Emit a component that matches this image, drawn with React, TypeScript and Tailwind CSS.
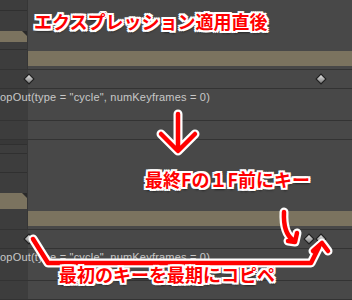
import React from "react";

const outline =
  "[text-shadow:2px_0_0_#fff,-2px_0_0_#fff,0_2px_0_#fff,0_-2px_0_#fff,2px_2px_0_#fff,-2px_-2px_0_#fff,2px_-2px_0_#fff,-2px_2px_0_#fff,1px_3px_2px_rgba(0,0,0,0.5)]";

function Diamond({ x }: { x: number }) {
  return (
    <div
      className="absolute top-1/2 h-[8px] w-[8px] rotate-45 border border-[#1e1e1e] bg-gradient-to-br from-[#e6e6e6] to-[#7a7a7a]"
      style={{ left: x - 4, marginTop: -4 }}
    />
  );
}

function Line() {
  return <div className="h-px w-full bg-[#333333]" />;
}

function TanLeft({ h }: { h: string }) {
  return (
    <div className={`relative ${h} w-full bg-[#7b735f]`}>
      <div className="absolute right-0 top-0 h-0 w-0 border-l-[5px] border-t-[5px] border-l-transparent border-t-[#2a2a2a]" />
    </div>
  );
}

function Section({ top }: { top: "a" | "b" }) {
  return (
    <>
      {/* keyframe row */}
      <div className="relative flex h-[18px]">
        <div className="w-[28px] bg-[#3d3d3d]" />
        <div className="flex-1" />
        {top === "a" ? (
          <>
            <Diamond x={29} />
            <Diamond x={321} />
          </>
        ) : (
          <>
            <Diamond x={29} />
            <Diamond x={309} />
            <Diamond x={321} />
          </>
        )}
      </div>
      <Line />
      {/* expression text row */}
      <div className="relative flex h-[31px]">
        <div className="w-[28px] bg-[#3d3d3d]" />
        <div className="flex-1" />
        <div className="absolute left-0 top-[2px] whitespace-nowrap font-['Liberation_Sans',sans-serif] text-[11px] leading-[13px] tracking-[0.2px] text-[#c8c8c8]">
          opOut(type = "cycle", numKeyframes = 0)
        </div>
      </div>
      <Line />
    </>
  );
}

export default function App() {
  return (
    <div className="relative h-[300px] w-[352px] overflow-hidden bg-[#484848] font-['Noto_Sans_CJK_JP',sans-serif]">
      {/* top block */}
      <div className="flex h-[51px]">
        <div className="flex w-[28px] flex-col border-r border-[#363636] bg-[#3d3d3d]">
          <div className="h-[10px]" />
          <div className="h-px bg-[#303030]" />
          <div className="h-[20px]" />
          <TanLeft h="h-[11px]" />
          <div className="h-[7px]" />
          <div className="h-px bg-[#303030]" />
          <div className="flex-1" />
        </div>
        <div className="flex-1" />
      </div>
      <div className="flex h-[18px]">
        <div className="w-[28px] border-r border-[#363636] bg-[#3d3d3d]" />
        <div className="flex flex-1 flex-col">
          <div className="h-[15px] bg-[#7b735f]" />
        </div>
      </div>
      <Line />
      <Section top="a" />
      {/* middle empty row */}
      <div className="flex h-[18px]">
        <div className="w-[28px] bg-[#3d3d3d]" />
        <div className="flex-1" />
      </div>
      <Line />
      {/* bottom block */}
      <div className="flex h-[71px]">
        <div className="flex w-[28px] flex-col border-r border-[#363636] bg-[#3d3d3d]">
          <div className="h-[4px] bg-[#383838]" />
          <div className="h-px bg-[#303030]" />
          <div className="h-[8px]" />
          <div className="h-px bg-[#303030]" />
          <div className="h-[18px]" />
          <div className="h-px bg-[#303030]" />
          <div className="h-[20px]" />
          <TanLeft h="h-[16px]" />
          <div className="flex-1" />
        </div>
        <div className="flex-1" />
      </div>
      <div className="flex h-[18px]">
        <div className="w-[28px] border-r border-[#363636] bg-[#3d3d3d]" />
        <div className="flex flex-1 flex-col">
          <div className="h-[15px] bg-[#7b735f]" />
        </div>
      </div>
      <Line />
      <Section top="b" />
      <div className="flex h-[18px]">
        <div className="w-[28px] bg-[#3d3d3d]" />
        <div className="flex-1" />
      </div>
      <Line />

      {/* annotations */}
      <svg className="pointer-events-none absolute left-0 top-0" width="352" height="300" viewBox="0 0 352 300">
        <g fill="none" stroke="#ffffff" strokeWidth="9" strokeLinejoin="round" strokeLinecap="round">
          <path d="M178 114 L178 150 M161 134 L178 151 L195 134" />
          <path d="M284 212 Q283 233 293 240 M288 241 L295 242 L297 233" />
          <path d="M33 239 L48 263 L311 263 L319 247 M313 251 L322 243 L328 251" />
        </g>
        <g fill="none" stroke="#ff0000" strokeWidth="4.5" strokeLinejoin="round" strokeLinecap="round">
          <path d="M178 114 L178 150 M161 134 L178 151 L195 134" />
          <path d="M284 212 Q283 233 293 240 M288 241 L295 242 L297 233" />
          <path d="M33 239 L48 263 L311 263 L319 247 M313 251 L322 243 L328 251" />
        </g>
      </svg>

      <div className={`absolute left-[34px] top-[12px] whitespace-nowrap text-[18px] font-bold leading-[18px] text-[#ff0000] ${outline}`}>
        エクスプレッション適用直後
      </div>
      <div className={`absolute left-[145px] top-[170px] whitespace-nowrap text-[18px] font-bold leading-[18px] text-[#ff0000] ${outline}`}>
        最終Fの１F前にキー
      </div>
      <div className={`absolute left-[59px] top-[265px] whitespace-nowrap text-[18px] font-bold leading-[18px] text-[#ff0000] ${outline}`}>
        最初のキーを最期にコピペ
      </div>
    </div>
  );
}
